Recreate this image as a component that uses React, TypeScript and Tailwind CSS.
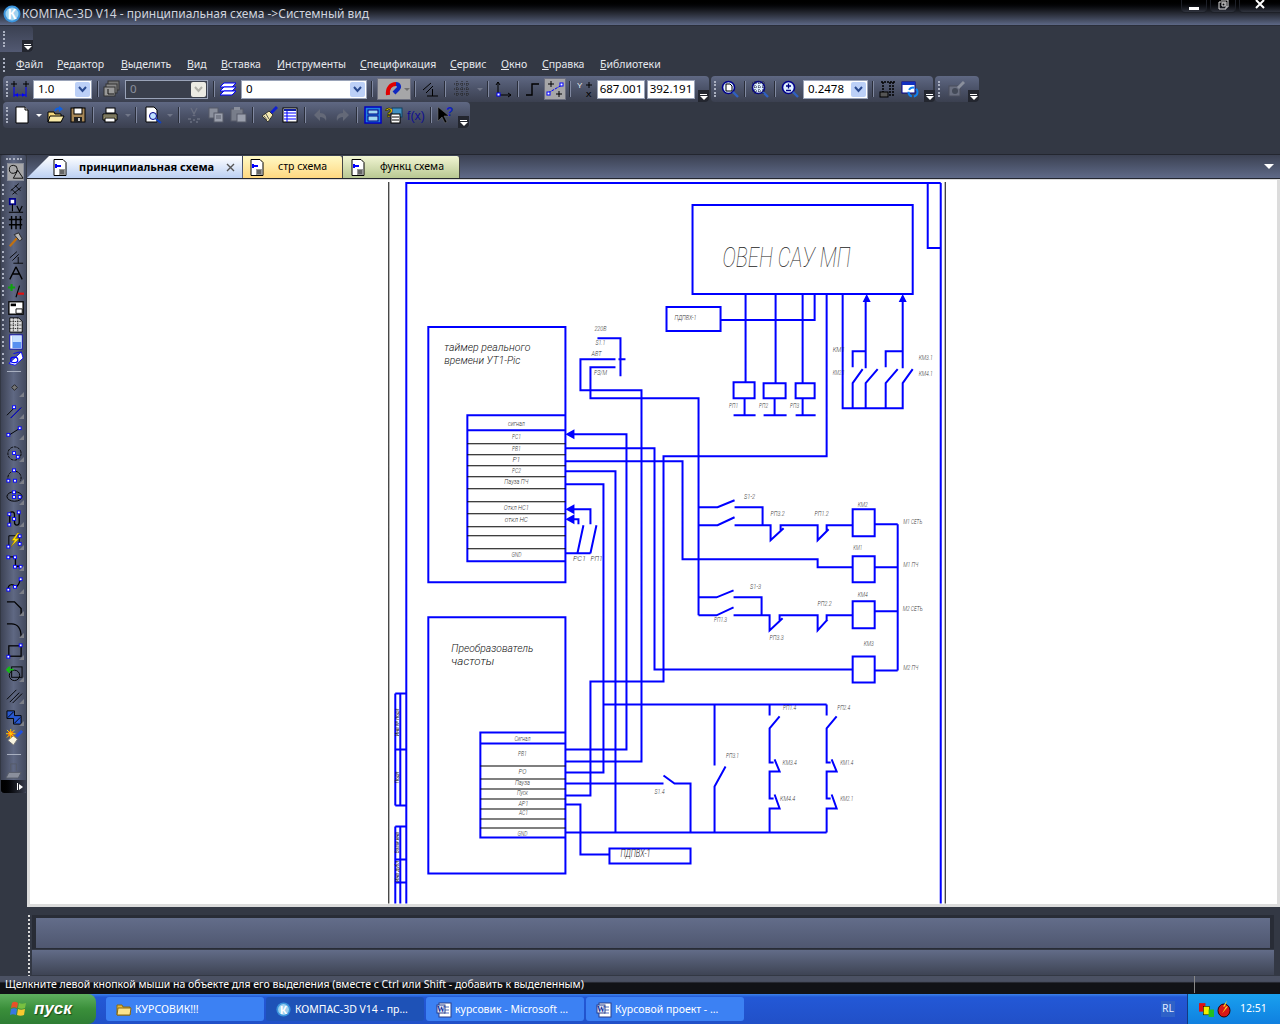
import React from "react";

const B = "#0000ff";
const Node = ({ x, y }: { x: number; y: number }) => <rect x={x} y={y} width="3" height="3" fill="#fff" stroke={B} />;
const Cross = ({ x, y, c = "#000" }: { x: number; y: number; c?: string }) => (
  <path d={`M${x - 3} ${y}H${x + 3}M${x} ${y - 3}V${y + 3}`} stroke={c} fill="none" />
);
const Mag = ({ children }: { children?: React.ReactNode }) => (
  <>
    <circle cx="7.5" cy="7.5" r="6" fill="#dff0ff" stroke="#00008b" strokeWidth="1.6" />
    <path d="M12 12L17 17" stroke="#3060c0" strokeWidth="2.4" />
    {children}
  </>
);

const icons: Record<string, React.ReactNode> = {
  dimNodes: (<><Cross x={3} y={4} /><Cross x={15} y={4} /><path d="M3 7V17M15 7V17M3 15H15" stroke={B} fill="none" /><path d="M4 15l3-2v4zM14 15l-3-2v4z" fill={B} /></>),
  layersGray: (<><rect x="5" y="1" width="11" height="9" fill="#777" stroke="#333" /><rect x="3" y="4" width="11" height="9" fill="#888" stroke="#333" /><rect x="1" y="7" width="11" height="9" fill="#999" stroke="#333" /><path d="M5 9V14H11" stroke="#111" fill="none" /></>),
  layersBlue: (<><path d="M5 3H17L13 7H1Z" fill="#fff" stroke={B} /><path d="M5 7H17L13 11H1Z" fill="#fff" stroke={B} /><path d="M5 11H17L13 15H1Z" fill="#fff" stroke={B} /></>),
  magnet: (<><path d="M4 15C3 8 7 4 12 4" stroke="#e00000" strokeWidth="4" fill="none" /><path d="M12 4C15 4 16 7 14 9L10 13" stroke="#1028c0" strokeWidth="4" fill="none" /></>),
  perp: (<path d="M2 10L10 3M5 13L12 6M6 16H17M11.5 9V16" stroke="#000" fill="none" />),
  perpG: (<path d="M2 10L10 3M5 13L12 6M6 16H17M11.5 9V16" stroke="#111" fill="none" />),
  grid: (<path d="M1 4H17M1 9H17M1 14H17M4 1V17M9 1V17M14 1V17" stroke="#222" strokeDasharray="1 1" fill="none" />),
  axes: (<><path d="M4 2V15H17M2 5L4 2L6 5M14 13L17 15L14 17" stroke="#000" fill="none" /><Node x={3} y={13} /></>),
  step: (<path d="M2 15H8V4H15" stroke="#000" strokeWidth="1.4" fill="none" />),
  snap: (<><Cross x={5} y={4} /><Cross x={13} y={14} /><path d="M2 13L16 5" stroke={B} strokeDasharray="3 1" /><Node x={1} y={12} /><Node x={14} y={3} /></>),
  yx: (<><text x="0" y="8" fontSize="8" fontFamily="Liberation Sans" fill="#eee">Y</text><Cross x={12} y={5} /><text x="9" y="17" fontSize="8" fontFamily="Liberation Sans" fill="#000" stroke="#000" strokeWidth=".2">X</text></>),
  zoomPage: (<Mag><path d="M5 4H9L11 6V11H5Z" fill="#fff" stroke="#000" /></Mag>),
  zoomDots: (<Mag><path d="M1 3H15M1 7H15M1 11H15M4 1V14M8 1V14M12 1V14" stroke="#224" strokeDasharray="1 1" fill="none" /></Mag>),
  zoomPm: (<Mag><path d="M5 6H10M7.5 3.5V8.5M5 10.5H10" stroke="#000080" strokeWidth="1.3" /></Mag>),
  crane: (<><path d="M2 2H17M4 2V14M14 2V17M11 2V17" stroke="#000" strokeWidth="1.5" strokeDasharray="2 1" fill="none" /><rect x="1" y="12" width="8" height="5" fill="#555" stroke="#000" /></>),
  refresh: (<><rect x="1" y="2" width="13" height="11" fill="#fff" stroke="#00008b" /><rect x="1" y="2" width="13" height="3" fill="#1030c0" /><circle cx="12" cy="12" r="4.5" fill="none" stroke="#1080f0" strokeWidth="2" strokeDasharray="6 2" /></>),
  ghost: (<><rect x="2" y="6" width="11" height="10" fill="#6a6f80" stroke="#4a4e5c" /><circle cx="8" cy="11" r="3" fill="#444a58" /><path d="M11 8L17 2" stroke="#8a8f9c" strokeWidth="3" /></>),
  doc: (<><path d="M3 1H12L15 4V17H3Z" fill="#fff" stroke="#000" /><path d="M12 1V4H15" stroke="#000" fill="#ddd" /></>),
  open: (<><path d="M1 6H7L8 8H14V16H1Z" fill="#f3d77a" stroke="#000" /><path d="M3 10H17L14 16H1Z" fill="#f8e9a8" stroke="#000" /><path d="M8 5C9 2 12 2 14 3" stroke="#1060e0" strokeWidth="2" fill="none" /><path d="M12 0L16 3L12 6Z" fill="#1060e0" /></>),
  save: (<><rect x="2" y="2" width="14" height="14" fill="#a88858" stroke="#000" /><rect x="5" y="2" width="8" height="6" fill="#fff" stroke="#000" /><rect x="5" y="11" width="8" height="5" fill="#222" /><rect x="9" y="12" width="2" height="3" fill="#ccc" /></>),
  print: (<><rect x="5" y="2" width="9" height="5" fill="#fff" stroke="#000" /><path d="M2 8H16V14H2Z" fill="#c8c090" stroke="#000" /><rect x="4" y="12" width="10" height="4" fill="#fff" stroke="#000" /><path d="M3 10H15" stroke="#333" /></>),
  preview: (<><path d="M2 1H10L13 4V16H2Z" fill="#fff" stroke="#000" /><circle cx="9" cy="10" r="3.5" fill="#bfe0ff" stroke="#00008b" /><path d="M12 13L17 17" stroke="#1040c0" strokeWidth="2" /></>),
  cut: (<path d="M6 2L10 10M12 2L8 10M3 13H6M12 13H15M5 16H7M11 16H13M8 14H10" stroke="#6a6f80" strokeWidth="1.3" fill="none" />),
  copy: (<><rect x="2" y="2" width="9" height="10" fill="#8a8f9c" stroke="#565b68" /><rect x="7" y="7" width="9" height="9" fill="#9a9fac" stroke="#565b68" /><path d="M9 10H14M9 12H14" stroke="#565b68" /></>),
  paste: (<><rect x="2" y="3" width="12" height="12" fill="#787d8a" stroke="#565b68" /><rect x="5" y="1" width="6" height="3" fill="#8a8f9c" /><rect x="8" y="8" width="9" height="8" fill="#9a9fac" stroke="#565b68" /></>),
  brush: (<><path d="M11 7L17 1" stroke="#1020d0" strokeWidth="3" /><path d="M9 5L13 9L8 16L2 10Z" fill="#f3e8b0" stroke="#333" /><path d="M6 8L9 13M4 10L7 14" stroke="#555" /></>),
  table: (<><rect x="2" y="2" width="14" height="14" fill="#fff" stroke="#000" /><rect x="3" y="3" width="12" height="2" fill="#1020a0" /><path d="M3 7H15M3 10H15M3 13H15M6 5V16" stroke={B} /></>),
  undo: (<path d="M8 3L2 9L8 15V11C11 11 13 12 14 15C15 10 13 7 8 7Z" fill="#646978" />),
  redo: (<path d="M10 3L16 9L10 15V11C7 11 5 12 4 15C3 10 5 7 10 7Z" fill="#646978" />),
  blueBox: (<><rect x="1" y="1" width="16" height="16" fill="#2080e0" stroke="#0000c0" strokeWidth="1.5" /><rect x="4" y="4" width="10" height="4" fill="#a0d8f0" stroke="#000080" /><rect x="4" y="10" width="10" height="5" fill="#a0d8f0" stroke="#000080" /></>),
  help2: (<><rect x="7" y="2" width="10" height="9" fill="#4090c0" stroke="#104060" /><rect x="6" y="8" width="9" height="9" fill="#fff" stroke="#000" /><path d="M7 14H14M7 11H14" stroke="#000" /><text x="0" y="11" fontSize="13" fontWeight="700" fontFamily="Liberation Sans" fill="#ffe000" stroke="#000" strokeWidth=".5">?</text></>),
  fx: (<text x="0" y="14" fontSize="13" fontFamily="Liberation Sans" fill="#101090" textLength="18" lengthAdjust="spacingAndGlyphs">f(x)</text>),
  cursorQ: (<><path d="M1 1V15L5 11L8 17L10 16L7 10H12Z" fill="#000" stroke="#777" strokeWidth=".5" /><text x="9" y="10" fontSize="12" fontWeight="700" fontFamily="Liberation Sans" fill="#1020c0">?</text></>),
  select: (<><circle cx="6" cy="6" r="4.5" fill="none" stroke="#000" /><path d="M11 7L17 16H6Z" fill="none" stroke="#000" /></>),
  dim: (<path d="M3 11L12 3M5 15L15 7M4 9L10 15M8 5L14 11" stroke="#000" fill="none" />),
  node: (<><rect x="2" y="1" width="6" height="6" fill="#fff" stroke="#00008b" strokeWidth="2" /><path d="M5 7V15M1 16H17M10 9L13 15L16 9" stroke="#000" strokeWidth="1.3" fill="none" /></>),
  gridBlk: (<path d="M1 5H16M1 11H16M4 1V16M9 1V16M14 1V16" stroke="#000" strokeWidth="1.6" fill="none" />),
  hammer: (<><path d="M2 16L10 7" stroke="#c07010" strokeWidth="2.4" /><path d="M7 3L12 1L16 8L13 10Z" fill="#b8b8b8" stroke="#222" /></>),
  compass: (<path d="M9 1L2 15M9 1L16 15M5 9H13" stroke="#000" strokeWidth="1.5" fill="none" />),
  plusminus: (<><path d="M9 16L13 3" stroke="#000" strokeWidth="1.3" /><path d="M4 1V9M0 5H8" stroke="#10a010" strokeWidth="2.4" /><path d="M11 12H18" stroke="#e01010" strokeWidth="2.4" /></>),
  sheet: (<><rect x="1" y="2" width="16" height="14" fill="#fff" stroke="#000" strokeWidth="1.5" /><rect x="3" y="4" width="6" height="3" fill="#000" /><path d="M9 10H16V15H9Z" fill="#fff" stroke="#000" /></>),
  tbl: (<><path d="M2 1H12L16 5V17H2Z" fill="#ddd" stroke="#000" /><path d="M2 5H16M2 9H16M2 13H16M6 1V17M11 1V17" stroke="#000" strokeDasharray="1 1" /></>),
  view: (<><rect x="2" y="1" width="14" height="16" fill="#fff" stroke="#0000b0" /><rect x="5" y="2" width="10" height="14" fill="#5890f0" /><rect x="5" y="2" width="10" height="7" fill="#c8e0ff" /></>),
  lay: (<><path d="M15 1L17 8L8 16L1 14Z" fill="#fff" stroke={B} /><ellipse cx="7" cy="10" rx="4" ry="3" fill="none" stroke={B} strokeWidth="1.4" /><path d="M6 3L14 1" stroke={B} /></>),
  point: (<path d="M9 6L12 9L9 12L6 9Z" fill="#777" stroke="#222" />),
  seg: (<><path d="M1 14L9 6M5 17L16 6" stroke="#000" /><path d="M5 17L16 6" stroke={B} /><Node x={7} y={4} /></>),
  line: (<><path d="M3 13L14 6" stroke="#000" /><Node x={1} y={11} /><Node x={13} y={4} /></>),
  circle: (<><circle cx="9" cy="9" r="7" fill="none" stroke="#000" strokeDasharray="3 1" /><Node x={7} y={7} /><Node x={11} y={11} /></>),
  arc: (<><path d="M3 15A7 7 0 1 1 15 15" fill="none" stroke="#000" strokeDasharray="3 1" /><Node x={7} y={2} /><Node x={1} y={13} /><Node x={8} y={13} /></>),
  ellipse: (<><ellipse cx="9" cy="9" rx="8" ry="5" fill="none" stroke="#000" /><Node x={7} y={3} /><Node x={7} y={8} /><Node x={13} y={8} /></>),
  spline: (<><path d="M4 16V5C4 1 9 1 9 5V13C9 17 14 17 14 13V3" fill="none" stroke="#000" strokeWidth="1.4" /><Node x={2} y={14} /><Node x={2} y={3} /><Node x={7} y={8} /><Node x={12} y={1} /></>),
  bolt: (<><path d="M3 15V4H14V15" fill="none" stroke="#000" /><path d="M12 1L6 9H9L5 16L14 7H10L14 1Z" fill="#ffe000" stroke="#806000" strokeWidth=".5" /><Node x={1} y={14} /><Node x={13} y={3} /><Node x={13} y={11} /></>),
  poly: (<><path d="M2 3H10V13H16" fill="none" stroke="#000" strokeWidth="1.4" /><Node x={1} y={2} /><Node x={8} y={2} /><Node x={8} y={12} /><Node x={14} y={12} /></>),
  bez: (<><path d="M2 15C2 7 8 9 10 11C12 12 14 8 15 4" fill="none" stroke="#000" strokeWidth="1.3" /><Node x={1} y={13} /><Node x={8} y={10} /><Node x={14} y={2} /></>),
  chamfer: (<path d="M1 3H9L16 10V17" fill="none" stroke="#000" strokeWidth="1.4" />),
  fillet: (<path d="M1 3H6C12 3 16 8 16 17" fill="none" stroke="#000" strokeWidth="1.4" />),
  rect: (<><rect x="3" y="3" width="13" height="11" fill="none" stroke="#000" strokeWidth="1.3" /><Node x={1} y={13} /><Node x={14} y={1} /></>),
  project: (<><rect x="6" y="2" width="11" height="11" fill="none" stroke="#000" /><circle cx="9" cy="11" r="5.5" fill="none" stroke="#000" /><path d="M8 5H1M4 2L1 5L4 8" stroke="#10c010" strokeWidth="1.8" fill="none" /></>),
  hlines: (<path d="M1 13L11 3M4 16L14 6M7 17L17 7" stroke="#000" fill="none" />),
  hatch: (<><path d="M1 2H9V7H16V16H8V10H1Z" fill="#2858d0" stroke="#000" /><path d="M2 9L8 3M9 15L15 9" stroke="#000" /></>),
  brush2: (<><path d="M11 8L17 2" stroke="#2050e0" strokeWidth="3" /><path d="M8 7L12 11L8 17L2 12Z" fill="#f8f4e0" stroke="#777" /><circle cx="5" cy="5" r="3" fill="#f04010" /><path d="M5 0V10M0 5H10M1 1L9 9M9 1L1 9" stroke="#ffd000" /></>),
  plate: (<><path d="M3 11H16L13 17H0Z" fill="#8a8f9c" stroke="#565b68" /><path d="M5 2V9M11 2V9M5 2H11" stroke="#565b68" /></>),
};

const I = ({ n, s = 18 }: { n: string; s?: number }) => (
  <svg width={s} height={s} viewBox="0 0 18 18" className="shrink-0 block">{icons[n]}</svg>
);

const Grip = ({ h = "h-[16px]" }: { h?: string }) => (
  <div className={`w-[2px] ${h} mx-[3px] shrink-0 border-l-2 border-dotted border-[#aab0c0]`} />
);
const Sep = ({ c }: { c: string }) => (
  <div className={`${c} h-full flex items-center justify-center shrink-0`}><div className="w-px h-[16px] bg-[#2a2e3a] border-r border-[#8088a0] box-content" /></div>
);
const S = ({ c, n }: { c: string; n: string }) => (
  <div className={`${c} h-full flex items-center justify-center shrink-0`}><I n={n} /></div>
);
const Arrow = ({ c, light }: { c: string; light?: boolean }) => (
  <div className={`${c} h-full flex items-center justify-center shrink-0`}>
    <div className={`w-0 h-0 border-x-[3px] border-t-[3px] border-x-transparent ${light ? "border-t-white" : "border-t-[#707688]"}`} />
  </div>
);
const Drop = () => (
  <div className="w-[11px] h-full shrink-0 flex items-end">
    <div className="w-full h-[12px] bg-[#23262f] rounded-br-[4px] flex flex-col items-center justify-end pb-[2px]">
      <div className="w-[7px] h-px bg-white mb-px" />
      <div className="w-0 h-0 border-x-[4px] border-t-[4px] border-x-transparent border-t-white" />
    </div>
  </div>
);
const Combo = ({ w, t, dis }: { w: string; t: string; dis?: boolean }) => (
  <div className={`${w} h-[19px] shrink-0 flex items-center border border-[#9aa3b8] ${dis ? "bg-[#3a3f4c] text-[#8a8f9c]" : "bg-white text-black"}`}>
    <span className="pl-[4px] flex-1 text-[11.5px]">{t}</span>
    <div className={`w-[15px] h-[15px] mr-px rounded-[2px] flex items-center justify-center ${dis ? "bg-[#ecebe3]" : "bg-[#bcd0f7]"}`}>
      <svg width="9" height="7" viewBox="0 0 9 7"><path d="M1 1L4.5 5L8 1" fill="none" stroke={dis ? "#b0b0a8" : "#2a4a90"} strokeWidth="2" /></svg>
    </div>
  </div>
);
const Bar = ({ c, children }: { c: string; children: React.ReactNode }) => (
  <div className={`${c} h-full flex items-center shrink-0 rounded-[4px] bg-linear-to-b from-[#5f6883] via-[#4b5268] to-[#3b4050]`}>{children}</div>
);

const menu: [string, string, string][] = [
  ["w-[41px]", "Ф", "айл"], ["w-[64px]", "Р", "едактор"], ["w-[66px]", "В", "ыделить"], ["w-[34px]", "В", "ид"],
  ["w-[56px]", "В", "ставка"], ["w-[83px]", "И", "нструменты"], ["w-[90px]", "С", "пецификация"], ["w-[51px]", "С", "ервис"],
  ["w-[41px]", "О", "кно"], ["w-[58px]", "С", "правка"], ["w-[70px]", "Б", "иблиотеки"],
];

type Tool = { h: string; n?: string; g?: boolean; t?: boolean; sep?: boolean; sel?: boolean };
const tools: Tool[] = [
  { h: "h-[18px]", n: "select", g: true, sel: true }, { h: "h-[16px]", n: "dim", g: true }, { h: "h-[17px]", n: "node", g: true },
  { h: "h-[17px]", n: "gridBlk", g: true }, { h: "h-[17px]", n: "hammer", g: true }, { h: "h-[17px]", n: "perp", g: true },
  { h: "h-[17px]", n: "compass", g: true }, { h: "h-[18px]", n: "plusminus", g: true }, { h: "h-[16px]", n: "sheet", g: true },
  { h: "h-[17px]", n: "tbl", g: true }, { h: "h-[17px]", n: "view", g: true }, { h: "h-[17px]", n: "lay", g: true },
  { h: "h-[9px]", sep: true }, { h: "h-[23px]", n: "point", t: true }, { h: "h-[22px]", n: "seg", t: true },
  { h: "h-[21px]", n: "line", t: true }, { h: "h-[22px]", n: "circle", t: true }, { h: "h-[22px]", n: "arc", t: true },
  { h: "h-[21px]", n: "ellipse", t: true }, { h: "h-[22px]", n: "spline", t: true }, { h: "h-[23px]", n: "bolt", t: true },
  { h: "h-[21px]", n: "poly", t: true }, { h: "h-[23px]", n: "bez", t: true }, { h: "h-[22px]", n: "chamfer", t: true },
  { h: "h-[22px]", n: "fillet", t: true }, { h: "h-[22px]", n: "rect", t: true }, { h: "h-[22px]", n: "project", t: true },
  { h: "h-[22px]", n: "hlines", t: true }, { h: "h-[22px]", n: "hatch", t: true }, { h: "h-[19px]", n: "brush2" },
  { h: "h-[14px]", sep: true }, { h: "h-[19px]", n: "plate" },
];

const thick = [
  "M406 182V903M406 183H940M940 183V903M927 183V248H940",
  "M692 205H912V294H692ZM666 307H720V331H666ZM720 320H814V294M745 294V382M775 294V383M802 294V383",
  "M733 382H754V398H733ZM744 398V415M733 415H755M763 383H785V398H763ZM774 398V415M763 415H786M795 383H814V398H795ZM802 398V415M795 415H815",
  "M826 294V456H663V681H590V795H565M842 294V408H902V383L912 369M865 300V368M852 367V351H865M852 408V383L862 369M865 408V383L877 369M885 367V351H902M902 300V368M885 408V383L897 369",
  "M428 327H565V582H428ZM467 415H565V561H467ZM467 430H565",
  "M570 434H626V749H565M565 448H654V669H852M565 461H682V559H817V567H852M565 471H615V832M565 484H603V772H565M603 704H826",
  "M570 509H590V524M570 519H578V524M583 525L577 553M596 525L590 553M565 553H590",
  "M597 338H620V376M615 359H580V390H641V761H565M618 359H625M615 367H590V398H698V615",
  "M698 507H717L734 500M734 507H762V525M698 525H717L734 517M734 525H770V540L783 528M780 530V525H817V540L828 529M826 531V525H852",
  "M852 509H874V536H852ZM874 524H897M852 556H874V582H852ZM874 567H897M852 601H874V628H852ZM874 611H897M852 656H874V682H852ZM874 670H897M897 524V670",
  "M698 597H716L733 590M733 597H761V615M698 615H716L733 607M733 615H769V630L782 618M779 620V615H817V630L827 619M826 621V615H852",
  "M428 617H565V873H428ZM480 732H565V837H480ZM480 743H565",
  "M565 783H663M663 775L674 783H690V832M565 832H826M565 804H580V854H609M609 848H690V863H609Z",
  "M714 704V765M725 766L714 786V832",
  "M769 704V715M779 716L769 728V762H773M774 759L779 771H769V798H773M774 794L779 808H769V832",
  "M826 704V715M836 716L826 728V762H830M831 759L836 771H826V798H830M831 794L836 808H826V832",
  "M395 693H406M395 805H406M395 693V805M400 693V805M395 749H406M395 826H406M395 826V903M400 826V903M395 859H406M395 882H406",
].join("");

const thin = "M388.5 182V903M944.5 182V903M467 443.5H565M467 454.5H565M467 465.5H565M467 476.5H565M467 488.5H565M467 501.5H565M467 513.5H565M467 526.5H565M467 535.5H565M467 548.5H565M480 765.5H565M480 778.5H565M480 788.5H565M480 798.5H565M480 808.5H565M480 818.5H565M480 827.5H565";

const arrows = "M565 434L574 429V439ZM565 509L574 504V514ZM565 519L574 514V524ZM866 294L862 302H870ZM902 294L898 302H906Z";

const labels: [number, number, string, number][] = [
  [685, 317, "ПДПВХ-1", 22], [600, 328, "220В", 12], [600, 342, "S1.1", 10], [596, 353, "АВТ", 10], [600, 372, "РЗ/М", 13],
  [733, 405, "РП1", 9], [763, 405, "РП2", 9], [794, 405, "РП3", 9], [838, 349, "КМ1", 12], [838, 372, "КМ2.1", 12], [925, 357, "КМ3.1", 14], [925, 373, "КМ4.1", 14],
  [516, 423, "сигнал", 17], [516, 436, "РС1", 9], [516, 448, "РВ1", 9], [516, 459, "Р1", 8], [516, 470, "РС2", 9], [516, 481, "Пауза ПЧ", 24], [516, 507, "Откл НС1", 25], [516, 519, "откл НС", 23], [516, 554, "GND", 10],
  [579, 558, "РС1", 13], [596, 558, "РП1", 12],
  [749, 496, "S1-2", 11], [777, 513, "РП3.2", 14], [821, 513, "РП1.2", 14], [862, 504, "КМ2", 10], [857, 547, "КМ1", 9], [912, 521, "М1 СЕТЬ", 19], [910, 564, "М1 ПЧ", 15],
  [755, 586, "S1-3", 11], [824, 603, "РП2.2", 14], [862, 594, "КМ4", 10], [720, 619, "РП1.3", 13], [776, 637, "РП3.3", 14], [868, 643, "КМ3", 10], [912, 608, "М2 СЕТЬ", 20], [910, 667, "М2 ПЧ", 15],
  [789, 707, "РП1.4", 13], [843, 707, "РП2.4", 13], [732, 755, "РП3.1", 13], [789, 762, "КМ3.4", 14], [846, 762, "КМ1.4", 13], [787, 798, "КМ4.4", 15], [846, 798, "КМ2.1", 13], [659, 791, "S1.4", 10],
  [522, 738, "Сигнал", 16], [522, 753, "РВ1", 9], [522, 771, "РО", 8], [522, 782, "Пауза", 15], [522, 792, "Пуск", 11], [523, 803, "АР1", 10], [523, 812, "АС1", 9], [522, 832, "GND", 10],
];

const Drawing = () => (
  <svg className="block w-full h-full" viewBox="30 180 1246 724" preserveAspectRatio="xMinYMin slice" fontFamily="Roboto, Liberation Sans, sans-serif" fontStyle="italic">
    <path d={thick} fill="none" stroke={B} strokeWidth="2" />
    <path d={thin} fill="none" stroke="#000" strokeWidth="1" />
    <path d={arrows} fill={B} />
    <text x="722" y="267" fontSize="28" textLength="128" lengthAdjust="spacingAndGlyphs" fill="#222" fontWeight="100">ОВЕН САУ МП</text>
    <g fontSize="11" fill="#111" fontWeight="300">
      <text x="444" y="351" textLength="86" lengthAdjust="spacingAndGlyphs">таймер реального</text>
      <text x="444" y="364" textLength="76" lengthAdjust="spacingAndGlyphs">времени УТ1-Pic</text>
      <text x="451" y="652" textLength="82" lengthAdjust="spacingAndGlyphs">Преобразователь</text>
      <text x="451" y="665" textLength="43" lengthAdjust="spacingAndGlyphs">частоты</text>
      <text x="620" y="856" textLength="30" lengthAdjust="spacingAndGlyphs">ПДПВХ-1</text>
    </g>
    <g fontSize="8" fill="#333" textAnchor="middle" fontWeight="300">
      {labels.map(([x, y, t, w]) => (
        <text key={`${x}-${y}`} x={x} y={y + 3} textLength={w} lengthAdjust="spacingAndGlyphs">{t}</text>
      ))}
    </g>
    <g fontSize="5" fill="#222" textAnchor="middle">
      <text transform="translate(399 722) rotate(-90)">Инв № подл</text>
      <text transform="translate(399 777) rotate(-90)">Подп</text>
      <text transform="translate(399 842) rotate(-90)">Взам инв</text>
      <text transform="translate(399 871) rotate(-90)">Инв дубл</text>
    </g>
  </svg>
);

const TabDoc = () => (
  <svg width="14" height="17" viewBox="0 0 14 17" className="shrink-0">
    <path d="M1 .5H10L13 3.5V16.5H1Z" fill="#fff" stroke="#000" />
    <rect x="2" y="5" width="2" height="4" fill={B} />
    <path d="M4 6H8V8H4Z" fill={B} />
    <path d="M6 11H12M6 13H12M6 15H12M8 11V15M10 11V15" stroke="#333" />
  </svg>
);

const KLogo = ({ s }: { s: number }) => (
  <svg width={s} height={s} viewBox="0 0 18 18" className="shrink-0">
    <circle cx="9" cy="9" r="8.5" fill="#3b94dc" />
    <circle cx="9" cy="9" r="6.5" fill="#9fd2f0" />
    <text x="9" y="14" textAnchor="middle" fontSize="14" fontWeight="700" fontFamily="Liberation Sans" fill="#fff">К</text>
  </svg>
);

const Word = () => (
  <svg width="16" height="16" viewBox="0 0 16 16" className="shrink-0">
    <rect x="3" y="1" width="12" height="14" fill="#fff" stroke="#2a3f8a" />
    <path d="M8 5H13M8 8H13M8 11H13" stroke="#5070c0" />
    <rect x="1" y="3" width="8" height="8" fill="#e8eefc" stroke="#2a3f8a" />
    <text x="5" y="10" textAnchor="middle" fontSize="8" fontWeight="700" fontFamily="Liberation Serif" fill="#12309a">W</text>
  </svg>
);

const taskBase = "w-[158px] h-[24px] flex items-center gap-[3px] pl-[10px] pt-px rounded-[3px] text-white text-[10.5px] shrink-0 whitespace-nowrap overflow-hidden";

export default function App() {
  return (
    <div className="w-[1280px] h-[1024px] overflow-hidden flex flex-col bg-[#333844] font-['Noto_Sans',sans-serif] text-[10.5px]">
      {/* Title bar */}
      <div className="h-[26px] shrink-0 relative flex items-center pl-[3px] pt-[2px] gap-px border-b border-[#2a2e3a] bg-linear-to-b from-black via-[#23262f] to-[#5d6886]">
        <KLogo s={18} />
        <span className="text-[#cfd3de] text-[12px]">КОМПАС-3D V14 - принципиальная схема -&gt;Системный вид</span>
        <div className="absolute right-0 top-0 flex gap-[3px]">
          <div className="w-[26px] h-[13px] bg-linear-to-b from-black to-[#30343f] border border-t-0 border-[#1d2028] rounded-b-[4px] flex items-end justify-center pb-[2px]"><div className="w-[10px] h-[3px] bg-white" /></div>
          <div className="w-[26px] h-[13px] bg-linear-to-b from-black to-[#30343f] border border-t-0 border-[#1d2028] rounded-b-[4px] flex items-start justify-center">
            <svg width="11" height="10" viewBox="0 0 11 10"><path d="M3 0H10V7H8M1 2V9H8V2H1ZM4 3H7V6H4Z" fill="none" stroke="#ddd" /></svg>
          </div>
          <div className="w-[41px] h-[13px] bg-linear-to-b from-black to-[#30343f] border border-t-0 border-r-0 border-[#1d2028] rounded-bl-[4px] flex items-start justify-center">
            <svg width="10" height="9" viewBox="0 0 10 9"><path d="M1 0L9 8M9 0L1 8" stroke="#fff" strokeWidth="2" /></svg>
          </div>
        </div>
      </div>

      {/* Stub toolbar */}
      <div className="h-[29px] shrink-0 pb-[3px]">
        <div className="w-[33px] h-full flex items-center rounded-r-[4px] bg-linear-to-b from-[#3b4152] to-[#525972] relative">
          <Grip />
          <div className="absolute right-0 bottom-0"><div className="w-[11px] h-[12px] bg-[#23262f] rounded-br-[4px] flex flex-col items-center justify-end pb-[2px]"><div className="w-[7px] h-px bg-white mb-px" /><div className="w-0 h-0 border-x-[4px] border-t-[4px] border-x-transparent border-t-white" /></div></div>
        </div>
      </div>

      {/* Menu */}
      <div className="h-[21px] shrink-0 flex items-center pb-[2px] text-[#e6e8ee]">
        <div className="w-[16px] flex shrink-0"><Grip h="h-[14px]" /></div>
        {menu.map(([w, a, b], i) => (
          <span key={i} className={`${w} shrink-0 whitespace-nowrap`}><span className="underline">{a}</span>{b}</span>
        ))}
      </div>

      {/* Toolbar row 1 */}
      <div className="h-[26px] shrink-0 flex pl-[3px] text-black">
        <Bar c="w-[706px]">
          <div className="w-[8px] shrink-0"><Grip /></div>
          <S c="w-[18px]" n="dimNodes" />
          <div className="w-[4px] shrink-0" />
          <Combo w="w-[59px]" t="1.0" />
          <Sep c="w-[12px]" />
          <S c="w-[16px]" n="layersGray" />
          <div className="w-[5px] shrink-0" />
          <Combo w="w-[83px]" t="0" dis />
          <Sep c="w-[12px]" />
          <S c="w-[16px]" n="layersBlue" />
          <div className="w-[5px] shrink-0" />
          <Combo w="w-[126px]" t="0" />
          <Sep c="w-[10px]" />
          <div className="w-[34px] h-[22px] shrink-0 bg-[#a6a6a8] border border-[#6d7080] flex items-center pl-[6px] gap-[2px]"><I n="magnet" /><div className="w-0 h-0 border-x-[3px] border-t-[3px] border-x-transparent border-t-[#707070]" /></div>
          <Sep c="w-[8px]" />
          <S c="w-[22px]" n="perp" />
          <Sep c="w-[8px]" />
          <S c="w-[26px]" n="grid" />
          <Arrow c="w-[9px]" />
          <Sep c="w-[8px]" />
          <S c="w-[22px]" n="axes" />
          <Sep c="w-[8px]" />
          <S c="w-[22px]" n="step" />
          <div className="w-[22px] h-[22px] shrink-0 bg-[#a6a6a8] border border-[#6d7080] flex items-center justify-center"><I n="snap" /></div>
          <Sep c="w-[8px]" />
          <S c="w-[23px]" n="yx" />
          <div className="w-[48px] h-[19px] shrink-0 bg-white border border-[#9aa3b8] flex items-center justify-center text-[11.5px]">687.001</div>
          <div className="w-[2px] shrink-0" />
          <div className="w-[48px] h-[19px] shrink-0 bg-white border border-[#9aa3b8] flex items-center justify-center text-[11.5px]">392.191</div>
          <div className="w-[3px] shrink-0" />
          <Drop />
        </Bar>
        <div className="w-[2px] shrink-0" />
        <Bar c="w-[222px]">
          <div className="w-[8px] shrink-0"><Grip /></div>
          <S c="w-[22px]" n="zoomPage" />
          <Sep c="w-[8px]" />
          <S c="w-[22px]" n="zoomDots" />
          <Sep c="w-[8px]" />
          <S c="w-[22px]" n="zoomPm" />
          <div className="w-[2px] shrink-0" />
          <Combo w="w-[65px]" t="0.2478" />
          <Sep c="w-[10px]" />
          <S c="w-[19px]" n="crane" />
          <S c="w-[26px]" n="refresh" />
          <div className="w-px shrink-0" />
          <Drop />
        </Bar>
        <div className="w-[2px] shrink-0" />
        <Bar c="w-[44px]">
          <div className="w-[8px] shrink-0"><Grip /></div>
          <S c="w-[25px]" n="ghost" />
          <Drop />
        </Bar>
      </div>

      {/* Toolbar row 2 */}
      <div className="h-[26px] shrink-0 flex pl-[3px]">
        <Bar c="w-[467px]">
          <div className="w-[8px] shrink-0"><Grip /></div>
          <S c="w-[22px]" n="doc" />
          <Arrow c="w-[12px]" light />
          <S c="w-[22px]" n="open" />
          <S c="w-[22px]" n="save" />
          <Sep c="w-[8px]" />
          <S c="w-[26px]" n="print" />
          <Arrow c="w-[9px]" />
          <Sep c="w-[8px]" />
          <S c="w-[25px]" n="preview" />
          <Arrow c="w-[9px]" />
          <Sep c="w-[9px]" />
          <S c="w-[21px]" n="cut" />
          <S c="w-[24px]" n="copy" />
          <S c="w-[20px]" n="paste" />
          <Sep c="w-[10px]" />
          <S c="w-[21px]" n="brush" />
          <S c="w-[22px]" n="table" />
          <Sep c="w-[8px]" />
          <S c="w-[23px]" n="undo" />
          <S c="w-[19px]" n="redo" />
          <Sep c="w-[12px]" />
          <S c="w-[19px]" n="blueBox" />
          <S c="w-[23px]" n="help2" />
          <S c="w-[22px]" n="fx" />
          <Sep c="w-[8px]" />
          <S c="w-[22px]" n="cursorQ" />
          <div className="w-px shrink-0" />
          <Drop />
        </Bar>
      </div>

      <div className="h-[26px] shrink-0" />
      {/* Main */}
      <div className="h-[753px] shrink-0 flex border-t border-[#23262f]">
        <div className="w-[27px] shrink-0 pl-px">
          <div className="w-[25px] flex flex-col bg-linear-to-r from-[#3e4456] via-[#5f6883] to-[#434a5e] rounded-t-[2px]">
            <div className="h-[8px] flex items-center justify-center"><div className="w-[16px] border-t-2 border-dotted border-[#aab0c0]" /></div>
            {tools.map((t, i) =>
              t.sep ? (
                <div key={i} className={`${t.h} flex items-center justify-center`}><div className="w-[14px] h-px bg-[#a8afc0]" /></div>
              ) : (
                <div key={i} className={`${t.h} relative flex items-center justify-center`}>
                  {t.g && <div className="absolute left-[1px] top-[3px] h-[11px] border-l-2 border-dotted border-[#aab0c0]" />}
                  {t.sel && <div className="absolute left-[6px] top-0 w-[17px] h-[18px] bg-[#a6a6a8] border border-[#8a8e9a]" />}
                  <div className={`relative ${t.g ? "ml-[4px]" : "ml-[2px]"}`}><I n={t.n as string} s={t.g ? 16 : 17} /></div>
                  {t.t && <div className="absolute right-[2px] bottom-[2px] w-0 h-0 border-l-[5px] border-b-[5px] border-l-transparent border-b-[#7c7f88]" />}
                </div>
              )
            )}
            <div className="h-[13px] bg-linear-to-r from-black to-[#3a3f4e] flex items-center justify-end pr-[3px] rounded-b-[3px]">
              <div className="w-px h-[7px] bg-white mr-px" />
              <div className="w-0 h-0 border-y-[3px] border-l-[4px] border-y-transparent border-l-white" />
            </div>
          </div>
        </div>
        <div className="flex-1 min-w-0 flex flex-col">
          {/* Tabs */}
          <div className="h-[24px] shrink-0 relative flex items-end bg-linear-to-b from-[#3b4152] to-[#5f6a88] border-b border-[#23262f]">
            <div className="w-[215px] h-[22px] shrink-0 flex items-center bg-linear-to-b from-white to-[#bcd0f2] [clip-path:polygon(22px_0,100%_0,100%_100%,0_100%)]">
              <div className="w-[26px] shrink-0" />
              <TabDoc />
              <span className="ml-[12px] w-[140px] font-bold text-[11px] text-black whitespace-nowrap">принципиальная схема</span>
              <svg width="9" height="9" viewBox="0 0 9 9" className="ml-[7px]"><path d="M1 1L8 8M8 1L1 8" stroke="#555" strokeWidth="1.4" /></svg>
            </div>
            <div className="w-[100px] h-[22px] shrink-0 ml-px flex items-center pl-[7px] rounded-tr-[3px] bg-linear-to-b from-[#fff9c4] to-[#ffd880] border-r border-[#444]">
              <TabDoc />
              <span className="ml-[14px] text-black whitespace-nowrap">стр схема</span>
            </div>
            <div className="w-[117px] h-[22px] shrink-0 flex items-center pl-[8px] rounded-tr-[3px] bg-linear-to-b from-[#f1f5d3] to-[#b9c892] border-r border-[#444]">
              <TabDoc />
              <span className="ml-[15px] text-black whitespace-nowrap">функц схема</span>
            </div>
            <div className="flex-1" />
            <div className="absolute right-[6px] top-[9px] w-0 h-0 border-x-[5px] border-t-[5px] border-x-transparent border-t-white" />
          </div>
          {/* Canvas */}
          <div className="flex-1 min-h-0 bg-white border-l-[3px] border-t border-r-[3px] border-b-[3px] border-[#dcdcdc] overflow-hidden">
            <Drawing />
          </div>
        </div>
      </div>

      {/* Bottom panels */}
      <div className="h-[8px] shrink-0" />
      <div className="h-[60px] shrink-0 flex">
        <div className="w-[28px] shrink-0" />
        <div className="w-[4px] shrink-0 h-[66px] border-l-2 border-dotted border-[#d8d8d8]" />
        <div className="w-[1242px] flex flex-col">
          <div className="h-[34px] bg-[#282c36] pl-[4px] pt-[3px] pr-[4px] pb-[1px]">
            <div className="h-full bg-linear-to-b from-[#636d8a] to-[#4f5770]" />
          </div>
          <div className="h-[25px] mt-px bg-linear-to-b from-[#626c88] to-[#3e4454]" />
        </div>
      </div>
      <div className="h-px shrink-0" />
      {/* Status */}
      <div className="h-[18px] shrink-0 relative bg-linear-to-b from-[#4b5163] from-30% to-[#111216] to-40% text-white flex items-center pl-[5px] whitespace-nowrap">
        <span>Щелкните левой кнопкой мыши на объекте для его выделения (вместе с Ctrl или Shift - добавить к выделенным)</span>
        <div className="absolute left-[1194px] top-0 w-px h-[17px] bg-[#888]" />
      </div>
      {/* Taskbar */}
      <div className="flex-1 min-h-0 flex items-center bg-linear-to-b from-[#3d82ea] via-[#2358d6] via-10% to-[#2150c8]">
        <div className="w-[96px] h-full shrink-0 flex items-center pl-[10px] gap-[6px] rounded-r-[8px] bg-linear-to-b from-[#5fb05f] via-[#3a8f3a] to-[#2e7d34]">
          <svg width="18" height="18" viewBox="0 0 18 18" className="shrink-0">
            <path d="M2 3C4 1 6 2 8 3L7 8C5 7 3 7 1 8Z" fill="#e8502a" />
            <path d="M9 3C11 4 13 4 16 3L15 8C13 9 10 9 8 8Z" fill="#78c040" />
            <path d="M1 9C3 8 5 8 7 9L6 15C4 14 2 14 0 15Z" fill="#3878e0" />
            <path d="M8 9C10 10 12 10 15 9L14 15C12 16 9 16 7 15Z" fill="#f8c830" />
          </svg>
          <span className="text-white italic font-bold text-[17px] font-['Liberation_Sans',sans-serif] [text-shadow:1px_1px_1px_#1a4a1a]">пуск</span>
        </div>
        <div className="w-[10px] shrink-0" />
        <div className={`${taskBase} bg-[#3c81f3]`}>
          <svg width="16" height="15" viewBox="0 0 16 15" className="shrink-0"><path d="M1 3H6L7 5H14V13H1Z" fill="#e8b93c" stroke="#8a6a10" /><path d="M2 6H15L14 13H1Z" fill="#fbe38c" stroke="#8a6a10" /></svg>
          <span>КУРСОВИК!!!</span>
        </div>
        <div className="w-[2px] shrink-0" />
        <div className={`${taskBase} bg-[#1e52b7]`}><KLogo s={15} /><span className="ml-px">КОМПАС-3D V14 - пр...</span></div>
        <div className="w-[2px] shrink-0" />
        <div className={`${taskBase} bg-[#3c81f3]`}><Word /><span>курсовик - Microsoft ...</span></div>
        <div className="w-[2px] shrink-0" />
        <div className={`${taskBase} bg-[#3c81f3]`}><Word /><span>Курсовой проект - ...</span></div>
        <div className="flex-1" />
        <span className="text-[#dfe9ff] bg-[#2f62c8] px-px mr-[12px]">RL</span>
        <div className="w-[93px] h-full shrink-0 flex items-center pl-[10px] gap-[2px] bg-linear-to-b from-[#1aa0ee] to-[#1080e0] border-l border-[#123a80] text-white">
          <svg width="17" height="17" viewBox="0 0 16 16" className="shrink-0"><rect x="1" y="2" width="6" height="8" fill="#e01010" /><rect x="5" y="5" width="6" height="8" fill="#f0f000" stroke="#000" strokeWidth=".5" /><rect x="10" y="8" width="5" height="7" fill="#20c020" /></svg>
          <svg width="15" height="18" viewBox="0 0 15 17" className="shrink-0"><ellipse cx="7" cy="10" rx="6" ry="6.5" fill="#d81818" stroke="#300" /><path d="M10 0L6 6H9L5 13L11 6H8Z" fill="#ffe020" /></svg>
          <span className="ml-[6px]">12:51</span>
        </div>
      </div>
    </div>
  );
}
